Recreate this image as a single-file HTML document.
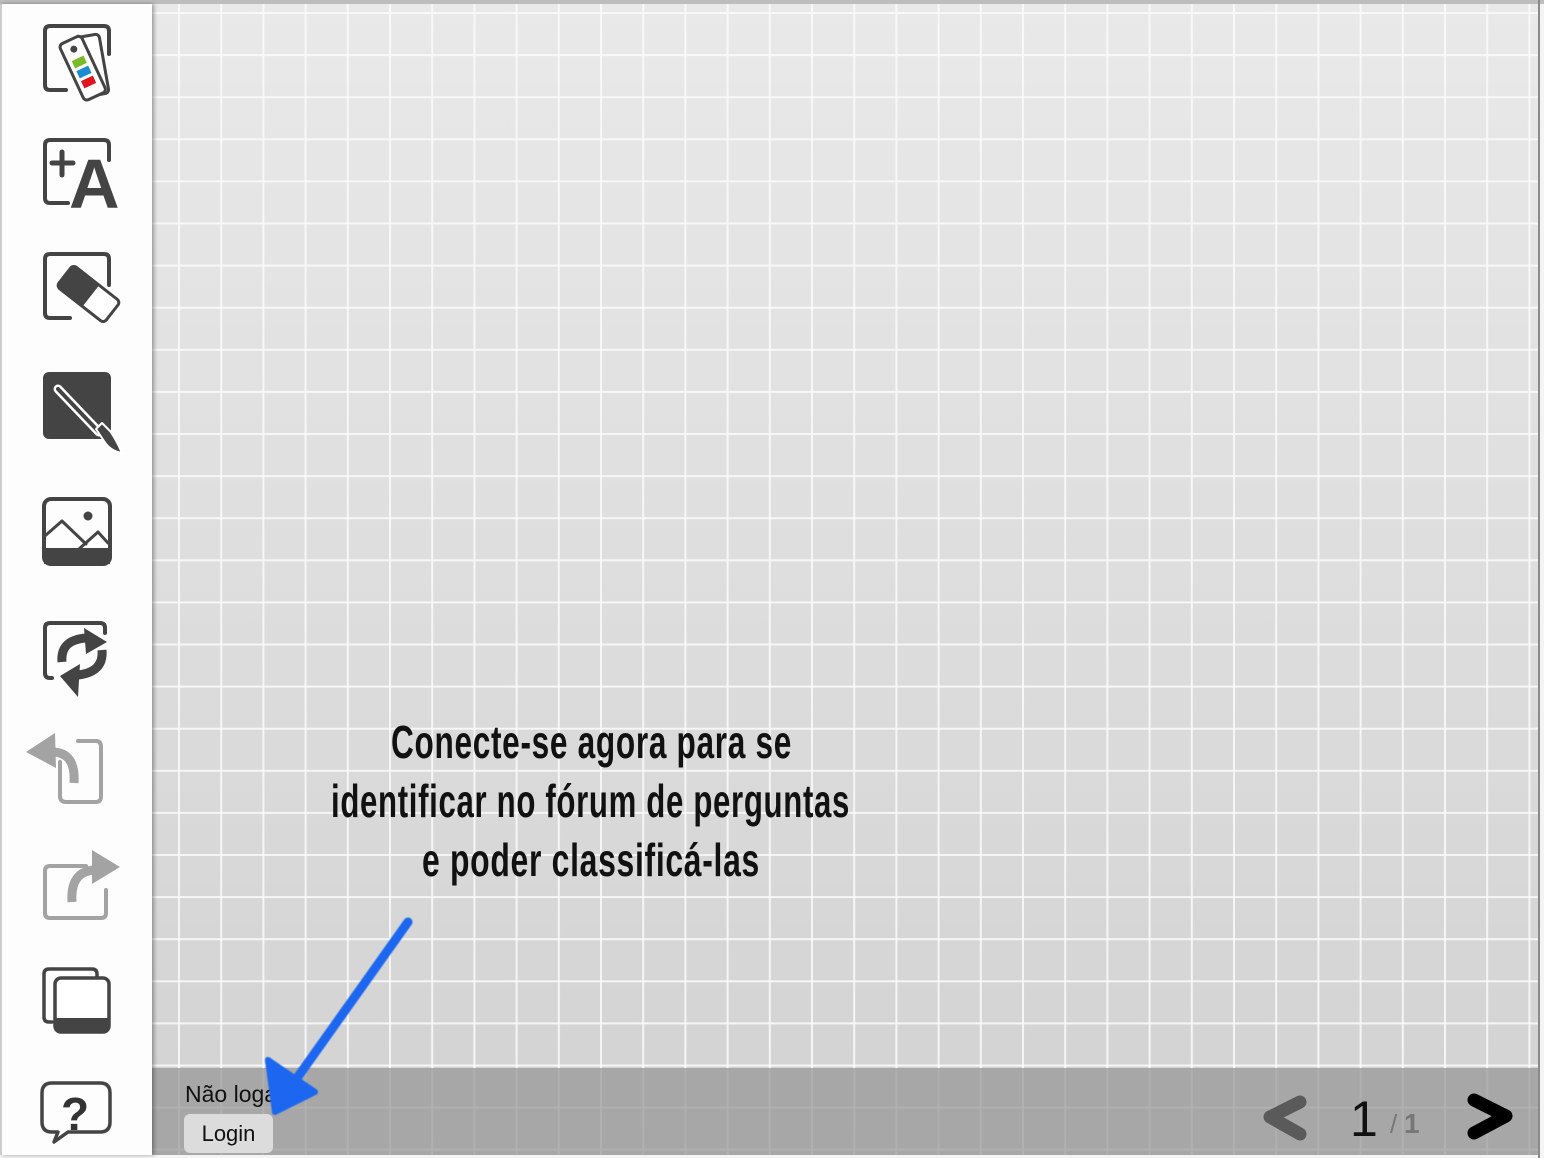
<!DOCTYPE html>
<html><head><meta charset="utf-8">
<style>
html,body{margin:0;padding:0;}
body{width:1544px;height:1158px;position:relative;overflow:hidden;background:#f4f4f4;font-family:"Liberation Sans",sans-serif;}
#top{position:absolute;left:0;top:0;width:1544px;height:4px;background:#bdbdbd;}
#canvas{position:absolute;left:152px;top:4px;width:1386px;height:1151px;background:linear-gradient(#e9e9e9,#d2d2d2);}
#rb{position:absolute;left:1538px;top:0;width:2px;height:1158px;background:#8a8a8a;}
#side{position:absolute;left:0;top:4px;width:152px;height:1151px;background:#fdfdfd;box-shadow:2px 0 4px rgba(0,0,0,.35);border-left:2px solid #ccc;box-sizing:border-box;}
#bar{position:absolute;left:152px;top:1068px;width:1386px;height:87px;background:rgba(150,150,150,.72);}
.t{position:absolute;color:#111;}
#login{position:absolute;left:184px;top:1114px;width:89px;height:39px;background:#dcdcdc;border-radius:6px;font-size:22px;line-height:39px;text-align:center;color:#111;}
</style></head><body>
<div id="top"></div>
<div id="canvas">
<svg width="1386" height="1151" style="position:absolute;left:0;top:0">
<defs><pattern id="g" width="42.2" height="42.1" patternUnits="userSpaceOnUse" x="26" y="8">
<rect x="0" y="0" width="2" height="42.1" fill="#fafafa" opacity=".85"/>
<rect x="0" y="0" width="42.2" height="2" fill="#fafafa" opacity=".85"/>
</pattern></defs>
<rect width="1386" height="1151" fill="url(#g)"/>
</svg>
</div>
<div id="rb"></div>
<div id="bar"></div>

<svg width="1544" height="1158" style="position:absolute;left:0;top:0">
<g font-family="Liberation Sans Narrow, Liberation Sans, sans-serif" font-weight="bold" font-size="46" fill="#111">
<text x="391" y="758" textLength="401" lengthAdjust="spacingAndGlyphs" letter-spacing="1">Conecte-se agora para se</text>
<text x="331" y="817" textLength="519" lengthAdjust="spacingAndGlyphs" letter-spacing="1">identificar no fórum de perguntas</text>
<text x="422" y="876" textLength="338" lengthAdjust="spacingAndGlyphs" letter-spacing="1">e poder classificá-las</text>
</g>
</svg>

<div class="t" style="left:185px;top:1081px;font-size:23px;">Não logado</div>
<div id="login">Login</div>

<svg width="1544" height="1158" style="position:absolute;left:0;top:0">
<defs><filter id="rough"><feGaussianBlur stdDeviation="0.6"/></filter></defs>
<g filter="url(#rough)">
<line x1="408" y1="922" x2="285" y2="1095" stroke="#1a66f0" stroke-width="9" stroke-linecap="round"/>
<path d="M268 1060 L275 1112 L315 1092 Z" fill="#1a66f0" stroke="#1a66f0" stroke-width="6" stroke-linejoin="round"/>
</g>
</svg>

<svg width="1544" height="1158" style="position:absolute;left:0;top:0">
<path d="M1300 1102 L1270 1117 L1300 1134" fill="none" stroke="#5a5a5a" stroke-width="13" stroke-linecap="round" stroke-linejoin="round"/>
<path d="M1474 1100 L1506 1116 L1474 1133" fill="none" stroke="#000" stroke-width="13" stroke-linecap="round" stroke-linejoin="round"/>
<text x="1350" y="1136" font-family="Liberation Sans,sans-serif" font-size="50" fill="#111">1</text>
<text x="1390" y="1133" font-family="Liberation Sans,sans-serif" font-size="26" fill="#777">/</text>
<text x="1404" y="1133" font-family="Liberation Sans,sans-serif" font-size="28" font-weight="bold" fill="#777">1</text>
</svg>

<div id="side"></div>
<svg width="152" height="1158" style="position:absolute;left:0;top:0">
<g fill="none" stroke="#444" stroke-width="4" stroke-linejoin="round" stroke-linecap="round">
<!-- palette -->
<path d="M66 90 H50 Q45 90 45 85 V31 Q45 26 50 26 H104 Q109 26 109 31 V54"/>
<g transform="rotate(-25 85 66)">
<rect x="76" y="38" width="22" height="60" rx="4" fill="#fff" stroke-width="3" transform="rotate(15 87 90)"/>
<rect x="70" y="36" width="24" height="62" rx="4" fill="#fff" stroke-width="3"/>
<circle cx="82" cy="46" r="3.5" fill="#444" stroke="none"/>
<rect x="75" y="56" width="13" height="8" fill="#7ab928" stroke="none"/>
<rect x="75" y="67" width="13" height="8" fill="#1a8bd0" stroke="none"/>
<rect x="75" y="78" width="13" height="8" fill="#e0141e" stroke="none"/>
</g>
<!-- text A -->
<path d="M68 203 H50 Q45 203 45 198 V145 Q45 140 50 140 H104 Q109 140 109 145 V160"/>
<path d="M62 152 V175 M52 163 H73" stroke-width="5"/>
</g>
<text x="69" y="208" font-family="Liberation Sans,sans-serif" font-weight="bold" font-size="70" fill="#444">A</text>
<g fill="none" stroke="#444" stroke-width="4" stroke-linejoin="round" stroke-linecap="round">
<!-- eraser -->
<path d="M70 318 H50 Q45 318 45 313 V259 Q45 254 50 254 H104 Q109 254 109 259 V285"/>
<g transform="rotate(38 88 293)">
<rect x="59" y="280" width="60" height="27" rx="4" fill="#fff" stroke-width="3"/>
<path d="M63 280 H92 V307 H63 Q59 307 59 303 V284 Q59 280 63 280 Z" fill="#444" stroke="none"/>
</g>
<!-- brush -->
<rect x="43" y="372" width="68" height="67" rx="6" fill="#444" stroke="none"/>
<path d="M58 389 L99 432" stroke="#fff" stroke-width="9"/>
<path d="M58 389 L99 432" stroke="#444" stroke-width="4"/>
<path d="M96 429 l6 -6 l8 8 q6 8 12 22 q-12 -2 -18 -12 z" fill="#444" stroke="#fff" stroke-width="2"/>
<!-- image -->
<rect x="44" y="499" width="66" height="65" rx="7"/>
<rect x="44" y="548" width="66" height="16" fill="#444" stroke="none"/>
<path d="M46 535 L62 521 L86 544 M79 549 L98 532 L108 543" stroke-width="3"/>
<circle cx="88" cy="516" r="4.5" fill="#444" stroke="none"/>
<!-- refresh -->
<path d="M52 678 H50 Q45 678 45 673 V628 Q45 623 50 623 H100 Q105 623 105 628 V633"/>
<path d="M62 662 Q60 640 86 638" stroke-width="9" stroke-linecap="butt"/>
<path d="M84 628 L107 642 L86 654 Z" fill="#444" stroke="none"/>
<path d="M102 650 Q104 672 78 675" stroke-width="9" stroke-linecap="butt"/>
<path d="M80 664 L60 676 L78 697 Z" fill="#444" stroke="none"/>
<!-- undo -->
<path d="M60 762 V796 Q60 802 66 802 H96 Q101 802 101 796 V747 Q101 741 96 741 H78" stroke="#a3a3a3"/>
<path d="M74 783 Q76 752 52 752" stroke="#a3a3a3" stroke-width="9" stroke-linecap="butt"/>
<path d="M55 733 L26 752 L56 768 Z" fill="#a3a3a3" stroke="none"/>
<!-- redo -->
<path d="M86 866 H50 Q45 866 45 871 V913 Q45 918 50 918 H101 Q106 918 106 913 V890" stroke="#a3a3a3"/>
<path d="M72 902 Q70 872 94 870" stroke="#a3a3a3" stroke-width="9" stroke-linecap="butt"/>
<path d="M92 850 L120 867 L92 884 Z" fill="#a3a3a3" stroke="none"/>
<!-- layers -->
<path d="M52 1022 H49 Q44 1022 44 1017 V974 Q44 969 49 969 H92 Q97 969 97 974 V978" stroke-width="3.5"/>
<rect x="55" y="978" width="54" height="54" rx="6" stroke-width="3.5" fill="#fff"/>
<path d="M55 1018 H109 V1026 Q109 1032 103 1032 H61 Q55 1032 55 1026 Z" fill="#444" stroke="none"/>
<!-- help -->
<path d="M52 1083 H100 Q110 1083 110 1093 V1122 Q110 1132 100 1132 H68 L54 1142 L58 1132 H52 Q42 1132 42 1122 V1093 Q42 1083 52 1083 Z" stroke-width="3.5"/>
</g>
<text x="61" y="1130" font-family="Liberation Sans,sans-serif" font-weight="bold" font-size="46" fill="#333">?</text>
</svg>
</body></html>
